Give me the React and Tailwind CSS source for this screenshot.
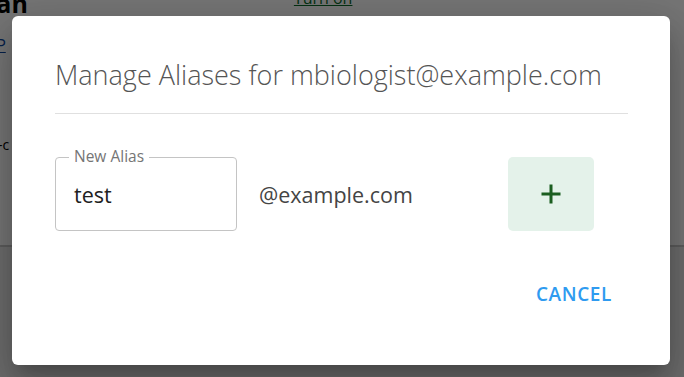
import React from "react";

export default function App() {
  return (
    <div className="relative w-[684px] h-[377px] overflow-hidden bg-white" style={{ fontFamily: '"Open Sans", "Noto Sans", sans-serif' }}>
      {/* underlying page */}
      <div className="flex flex-col h-full">
        <div className="h-[245px] bg-white relative">
          <div className="flex items-start -mt-[12px]">
            <div className="text-[25px] font-bold text-black -ml-[27px] leading-[30px]">Plan</div>
            <div className="ml-[266px] mt-[-1px] text-[16px] text-[#0b6b2a] underline leading-[22px]">Turn on</div>
          </div>
          <div className="-ml-[8px] mt-[16px] text-[16px] text-[#0d47a1] underline leading-[22px]">&nbsp;P</div>
          <div className="-ml-[2px] mt-[80px] text-[14px] text-black leading-[18px]">-c</div>
        </div>
        <div className="h-[2px] bg-[#c8c8c8]" />
        <div className="flex-1 bg-[#ececec]" />
      </div>

      {/* overlay */}
      <div className="absolute inset-0 bg-black/[0.54] flex items-start">
        <div className="ml-[12px] mt-[16px] w-[658px] h-[349px] bg-white rounded-[6px] shadow-[0_11px_15px_-7px_rgba(0,0,0,0.2),0_24px_38px_3px_rgba(0,0,0,0.14),0_9px_46px_8px_rgba(0,0,0,0.12)] pl-[43px] pr-[42px] pt-[43px] flex flex-col">
          <div className="border-b border-[#e0e0e0] pb-[22px]">
            <div className="text-[27px] font-light leading-[32px] text-[#555] whitespace-nowrap">Manage Aliases for mbiologist@example.com</div>
          </div>

          <div className="mt-[43px] flex items-center pr-[34px]">
            <div className="relative w-[182px] h-[74px] rounded-[4px] border border-[#c4c4c4] flex items-center pl-[18px]">
              <span className="absolute -top-[12px] left-[13px] px-[5px] bg-white text-[15.5px] leading-[20px] text-[#757575]">New Alias</span>
              <span className="text-[21.5px] text-[#212121] leading-[26px] mt-[2px]">test</span>
            </div>
            <div className="ml-[22px] text-[21.5px] text-[#444] leading-[26px] mt-[2px]">@example.com</div>
            <button className="ml-auto w-[86px] h-[74px] rounded-[5px] bg-[#e4f2ea] flex items-center justify-center">
              <svg width="20" height="20" viewBox="0 0 20 20">
                <path d="M10 0.5v19M0.5 10h19" stroke="#1b5e20" strokeWidth="3" fill="none" />
              </svg>
            </button>
          </div>

          <div className="mt-[48px] flex justify-end">
            <button className="px-[16px] h-[30px] text-[19px] font-semibold tracking-[0.6px] text-[#2f9bf0] leading-[24px]">CANCEL</button>
          </div>
        </div>
      </div>
    </div>
  );
}
